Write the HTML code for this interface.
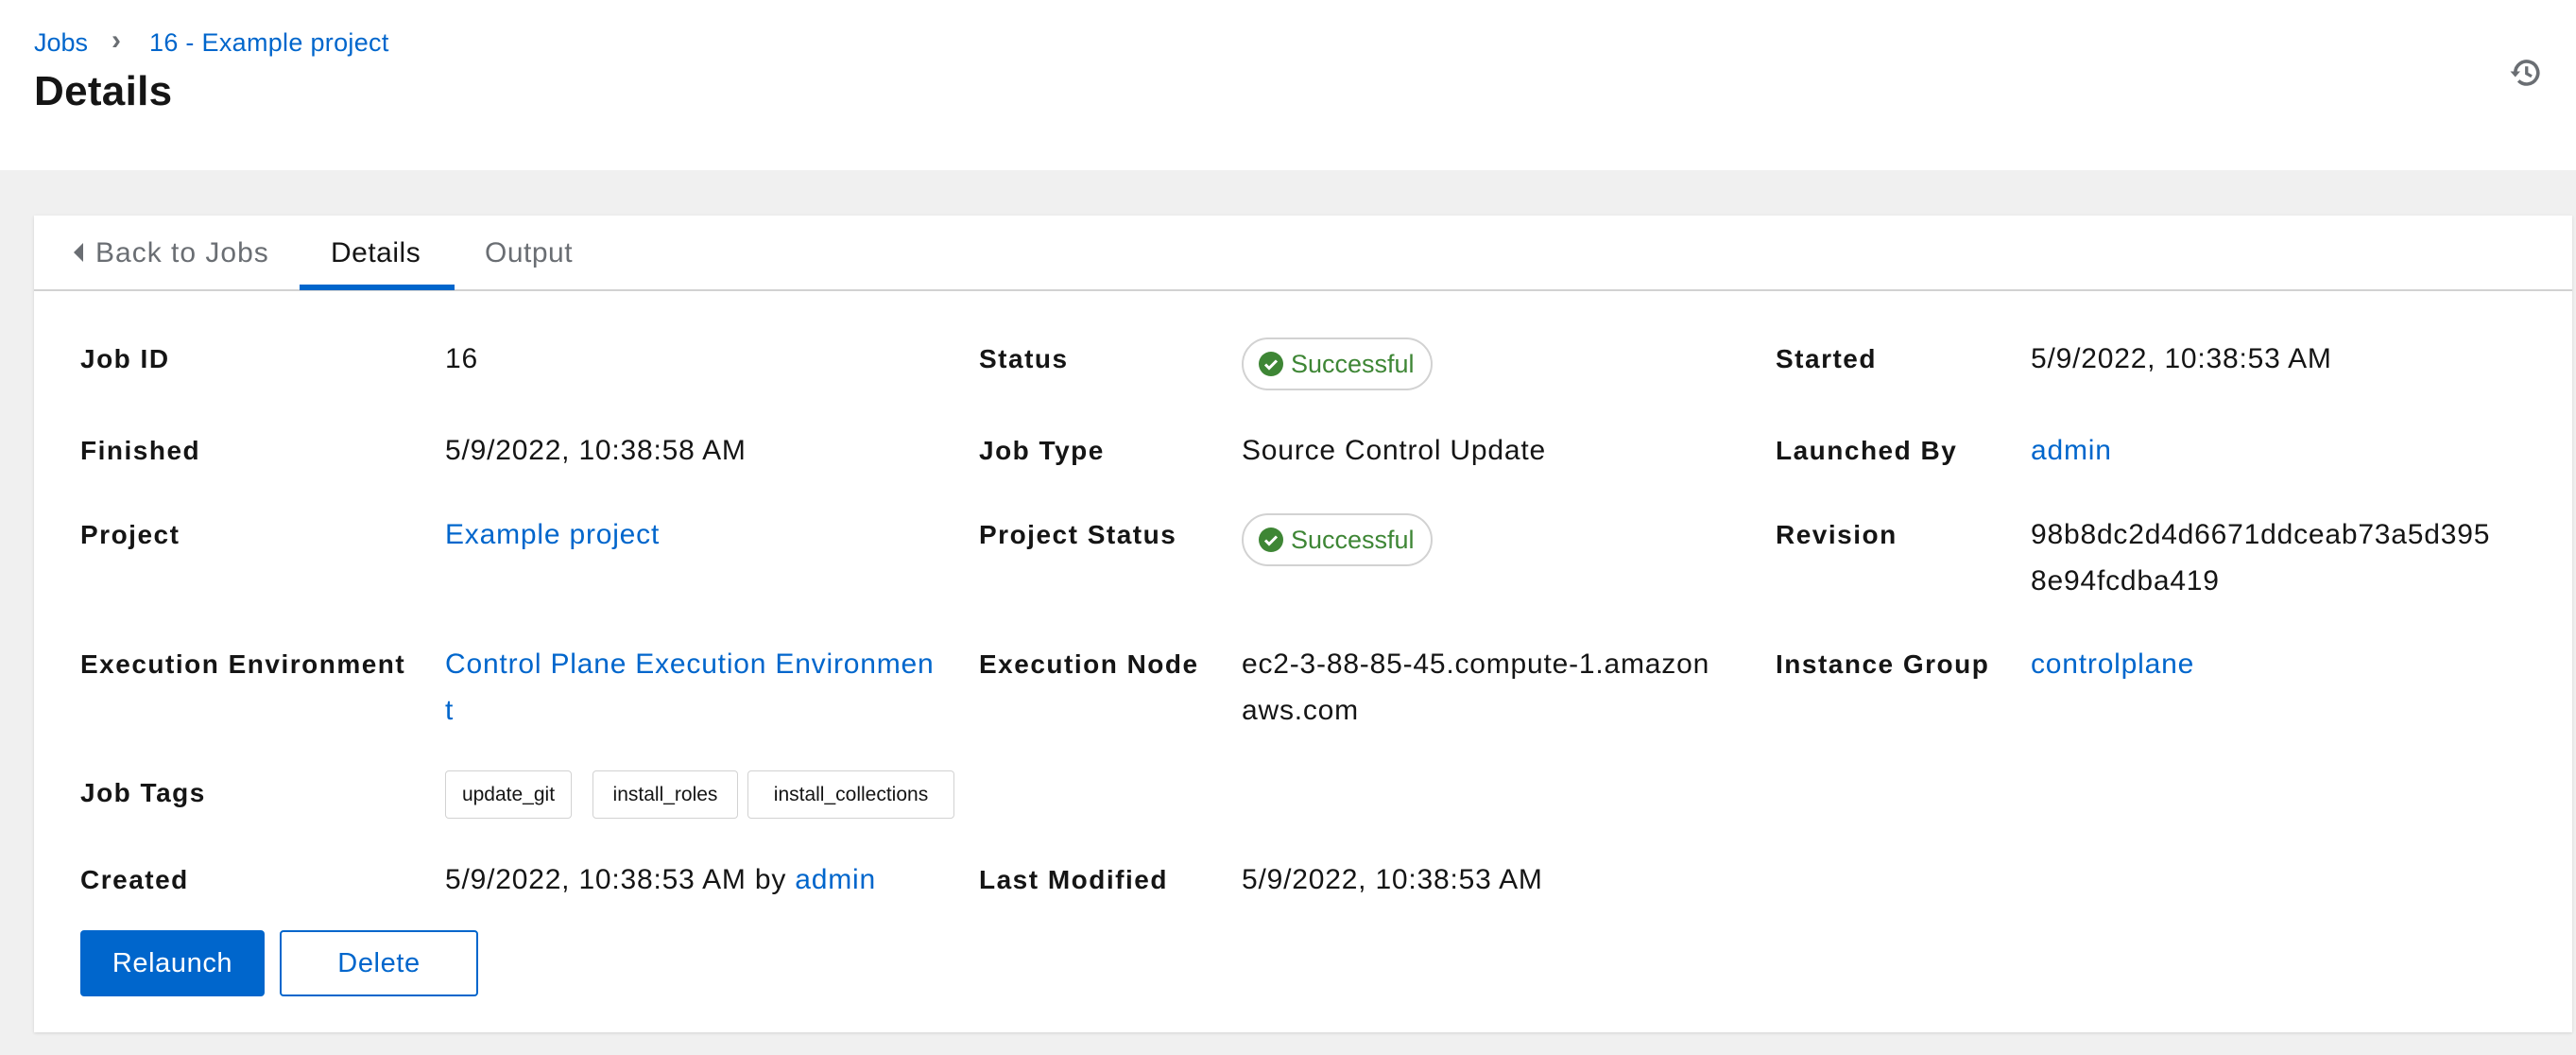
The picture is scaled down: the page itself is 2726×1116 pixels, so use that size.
<!DOCTYPE html>
<html><head><meta charset="utf-8"><style>
*{margin:0;padding:0;box-sizing:border-box}
body{width:2726px;height:1116px;background:#f0f0f0;font-family:"Liberation Sans",sans-serif;color:#151515;position:relative;overflow:hidden}
.hdr{position:absolute;left:0;top:0;width:2726px;height:180px;background:#fff}
.a{position:absolute;white-space:nowrap}
.link{color:#0066cc}
.card{position:absolute;left:36px;top:228px;width:2686px;height:864px;background:#fff;box-shadow:0 1px 3px rgba(0,0,0,.12)}
.lbl{position:absolute;font-size:28px;font-weight:bold;line-height:49px;letter-spacing:1.5px;white-space:nowrap}
.val{position:absolute;font-size:30px;line-height:49px;letter-spacing:0.8px;white-space:nowrap}
.badge{position:absolute;width:202px;height:56px;border:2px solid #d2d2d2;border-radius:28px;color:#3e8635;font-size:27px;display:flex;align-items:center;padding-left:16px}
.badge svg{margin-right:8px}
.chip{position:absolute;top:815px;height:51px;border:1px solid #d2d2d2;border-radius:4px;font-size:21px;line-height:49px;text-align:center}
</style></head><body>
<div class="hdr"></div>
<div class="a link" style="left:36px;top:30px;font-size:27px">Jobs</div>
<div class="a" style="left:118px;top:26px;font-size:30px;color:#6a6e73;font-weight:bold">›</div>
<div class="a link" style="left:158px;top:30px;font-size:27px;letter-spacing:0.3px">16 - Example project</div>
<div class="a" style="left:36px;top:72px;font-size:44px;font-weight:bold;letter-spacing:0.3px">Details</div>
<svg class="a" style="left:2655px;top:59px" width="36" height="36" viewBox="0 0 24 24"><path d="M4.5 12a8 8 0 1 1 2.3 5.6" fill="none" stroke="#6a6e73" stroke-width="2.4"/><path d="M1 11h7l-3.5 4z" fill="#6a6e73"/><path d="M12.5 7.5v5l3.5 2" fill="none" stroke="#6a6e73" stroke-width="2.2"/></svg>
<div class="card"></div>
<div class="a" style="left:36px;top:306px;width:2686px;height:2px;background:#d2d2d2"></div>
<div class="a" style="left:317px;top:301px;width:164px;height:6px;background:#0066cc"></div>
<svg class="a" style="left:78px;top:257px" width="10" height="20"><path d="M10 0v20L0 10z" fill="#6a6e73"/></svg>
<div class="a" style="left:101px;top:251px;font-size:30px;color:#6a6e73;letter-spacing:1px">Back to Jobs</div>
<div class="a" style="left:350px;top:251px;font-size:30px;letter-spacing:0.5px">Details</div>
<div class="a" style="left:513px;top:251px;font-size:30px;color:#6a6e73;letter-spacing:0.5px">Output</div>

<div class="lbl" style="left:85px;top:355px">Job ID</div>
<div class="val" style="left:471px;top:355px">16</div>
<div class="lbl" style="left:1036px;top:355px">Status</div>
<div class="badge" style="left:1314px;top:357px"><svg width="26" height="26" viewBox="0 0 26 26"><circle cx="13" cy="13" r="13" fill="#3e8635"/><path d="M7 13.5l4 4 8-8" fill="none" stroke="#fff" stroke-width="3"/></svg>Successful</div>
<div class="lbl" style="left:1879px;top:355px">Started</div>
<div class="val" style="left:2149px;top:355px">5/9/2022, 10:38:53 AM</div>

<div class="lbl" style="left:85px;top:452px">Finished</div>
<div class="val" style="left:471px;top:452px">5/9/2022, 10:38:58 AM</div>
<div class="lbl" style="left:1036px;top:452px">Job Type</div>
<div class="val" style="left:1314px;top:452px">Source Control Update</div>
<div class="lbl" style="left:1879px;top:452px">Launched By</div>
<div class="val link" style="left:2149px;top:452px">admin</div>

<div class="lbl" style="left:85px;top:541px">Project</div>
<div class="val link" style="left:471px;top:541px">Example project</div>
<div class="lbl" style="left:1036px;top:541px">Project Status</div>
<div class="badge" style="left:1314px;top:543px"><svg width="26" height="26" viewBox="0 0 26 26"><circle cx="13" cy="13" r="13" fill="#3e8635"/><path d="M7 13.5l4 4 8-8" fill="none" stroke="#fff" stroke-width="3"/></svg>Successful</div>
<div class="lbl" style="left:1879px;top:541px">Revision</div>
<div class="val" style="left:2149px;top:541px">98b8dc2d4d6671ddceab73a5d395<br>8e94fcdba419</div>

<div class="lbl" style="left:85px;top:678px">Execution Environment</div>
<div class="val link" style="left:471px;top:678px">Control Plane Execution Environmen<br>t</div>
<div class="lbl" style="left:1036px;top:678px">Execution Node</div>
<div class="val" style="left:1314px;top:678px">ec2-3-88-85-45.compute-1.amazon<br>aws.com</div>
<div class="lbl" style="left:1879px;top:678px">Instance Group</div>
<div class="val link" style="left:2149px;top:678px">controlplane</div>

<div class="lbl" style="left:85px;top:814px">Job Tags</div>
<div class="chip" style="left:471px;width:134px">update_git</div>
<div class="chip" style="left:627px;width:154px">install_roles</div>
<div class="chip" style="left:791px;width:219px">install_collections</div>

<div class="lbl" style="left:85px;top:906px">Created</div>
<div class="val" style="left:471px;top:906px">5/9/2022, 10:38:53 AM by <span class="link">admin</span></div>
<div class="lbl" style="left:1036px;top:906px">Last Modified</div>
<div class="val" style="left:1314px;top:906px">5/9/2022, 10:38:53 AM</div>

<div class="a" style="left:85px;top:984px;width:195px;height:70px;background:#0066cc;color:#fff;border-radius:4px;font-size:29px;line-height:70px;text-align:center;letter-spacing:0.6px">Relaunch</div>
<div class="a" style="left:296px;top:984px;width:210px;height:70px;border:2px solid #0066cc;color:#0066cc;border-radius:4px;font-size:29px;line-height:66px;text-align:center;letter-spacing:0.6px">Delete</div>
</body></html>
